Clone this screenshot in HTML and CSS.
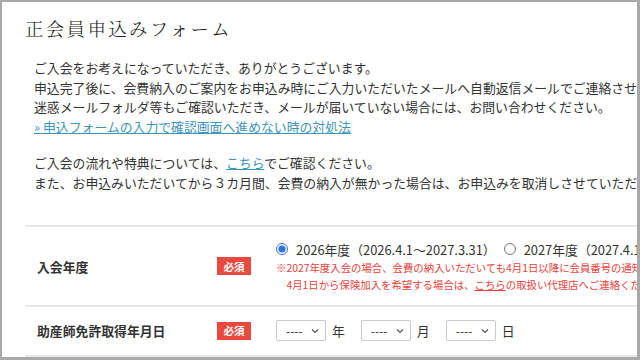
FILE: index.html
```html
<!DOCTYPE html>
<html lang="ja">
<head>
  <meta charset="UTF-8">
  <meta name="viewport" content="width=device-width, initial-scale=1.0">
  <title>正会員申込みフォーム</title>
  <link rel="stylesheet" href="styles.css">
</head>
<body>
  <div class="page">
    <h1 class="title">正会員申込みフォーム</h1>

    <div class="intro">
      <p>ご入会をお考えになっていただき、ありがとうございます。<br>
        申込完了後に、会費納入のご案内をお申込み時にご入力いただいたメールへ自動返信メールでご連絡させていただきます。<br>
        迷惑メールフォルダ等もご確認いただき、メールが届いていない場合には、お問い合わせください。<br>
        <a href="#">» 申込フォームの入力で確認画面へ進めない時の対処法</a></p>
      <p>ご入会の流れや特典については、<a href="#">こちら</a>でご確認ください。<br>
        また、お申込みいただいてから３カ月間、会費の納入が無かった場合は、お申込みを取消しさせていただきます。</p>
    </div>

    <div class="form">
      <div class="row row-year">
        <div class="label">入会年度</div>
        <span class="badge">必須</span>
        <div class="field">
          <div class="radios">
            <label class="radio"><input type="radio" name="year" checked>2026年度（2026.4.1〜2027.3.31）</label>
            <label class="radio"><input type="radio" name="year">2027年度（2027.4.1〜2028.3.31）</label>
          </div>
          <p class="note">※2027年度入会の場合、会費の納入いただいても4月1日以降に会員番号の通知となります。<br>4月1日から保険加入を希望する場合は、<a href="#">こちら</a>の取扱い代理店へご連絡ください。</p>
        </div>
      </div>

      <div class="row row-date">
        <div class="label">助産師免許取得年月日</div>
        <span class="badge">必須</span>
        <div class="field date">
          <span class="select">
            <select><option>----</option></select>
            <svg class="chevron" width="8" height="6" viewBox="0 0 8 6"><polyline points="1,1.5 4,4.5 7,1.5" fill="none" stroke="#555" stroke-width="1.1"/></svg>
          </span>
          <span class="unit">年</span>
          <span class="select">
            <select><option>----</option></select>
            <svg class="chevron" width="8" height="6" viewBox="0 0 8 6"><polyline points="1,1.5 4,4.5 7,1.5" fill="none" stroke="#555" stroke-width="1.1"/></svg>
          </span>
          <span class="unit">月</span>
          <span class="select">
            <select><option>----</option></select>
            <svg class="chevron" width="8" height="6" viewBox="0 0 8 6"><polyline points="1,1.5 4,4.5 7,1.5" fill="none" stroke="#555" stroke-width="1.1"/></svg>
          </span>
          <span class="unit">日</span>
        </div>
      </div>
    </div>
  </div>
</body>
</html>
```

FILE: styles.css
```css
body {
  margin: 0;
  background-color: #a9a9a9;
  font-family: "Noto Sans CJK JP", "Noto Sans", sans-serif;
  color: #333;
}

.page {
  margin: 2px 3px 3px 2px;
  height: 355px;
  box-sizing: border-box;
  padding: 13px 0 0 23px;
  background-color: #fff;
  overflow: hidden;
}

.title {
  font-family: "Noto Serif CJK JP", "Noto Sans CJK JP", serif;
  font-weight: 300;
  font-size: 18.5px;
  letter-spacing: 2.3px;
  line-height: 26px;
  margin: 0 0 17px;
  color: #222;
}

.intro {
  padding-left: 9px;
}

.intro p {
  margin: 0;
  font-size: 12.85px;
  line-height: 19.5px;
  white-space: nowrap;
}

.intro p + p {
  margin-top: 17px;
}

.intro a {
  color: #3f94b9;
  text-decoration: underline;
}

.form {
  margin-top: 33px;
  border-top: 2px solid #e8e8e8;
}

.row {
  display: flex;
  align-items: center;
  border-bottom: 2px solid #e8e8e8;
}

.row-year {
  padding: 12px 0;
}

.row-date {
  padding: 13px 0 14px;
}

.label {
  width: 180px;
  flex-shrink: 0;
  padding-left: 12px;
  font-size: 12.85px;
  font-weight: 700;
  color: #333;
}

.badge {
  display: flex;
  align-items: center;
  justify-content: center;
  flex-shrink: 0;
  width: 34px;
  height: 18px;
  background-color: #e84a40;
  color: #fff;
  font-size: 10.5px;
  font-weight: 700;
}

.field {
  margin-left: 25px;
  white-space: nowrap;
  font-size: 12.85px;
}

.radios {
  display: flex;
  align-items: center;
  gap: 8px;
  height: 20px;
}

.radio {
  display: inline-flex;
  align-items: center;
  gap: 8px;
}

.radio input {
  margin: 0;
  width: 12px;
  height: 12px;
  accent-color: #2f73e8;
}

.note {
  margin: 0;
  font-size: 10.4px;
  line-height: 17px;
  color: #e8413b;
  padding-left: 1em;
  text-indent: -1em;
}

.note a {
  color: #e8413b;
}

.date {
  display: flex;
  align-items: center;
}

.select {
  position: relative;
  width: 50px;
  height: 21px;
}

.select select {
  width: 100%;
  height: 100%;
  appearance: none;
  -webkit-appearance: none;
  border: 1px solid #c9c9c9;
  border-radius: 2px;
  background-color: #fff;
  padding: 0 0 0 9px;
  font-family: inherit;
  font-size: 12px;
  color: #333;
}

.chevron {
  position: absolute;
  right: 7px;
  top: 8px;
}

.unit {
  margin: 0 16px 0 6px;
}
```
